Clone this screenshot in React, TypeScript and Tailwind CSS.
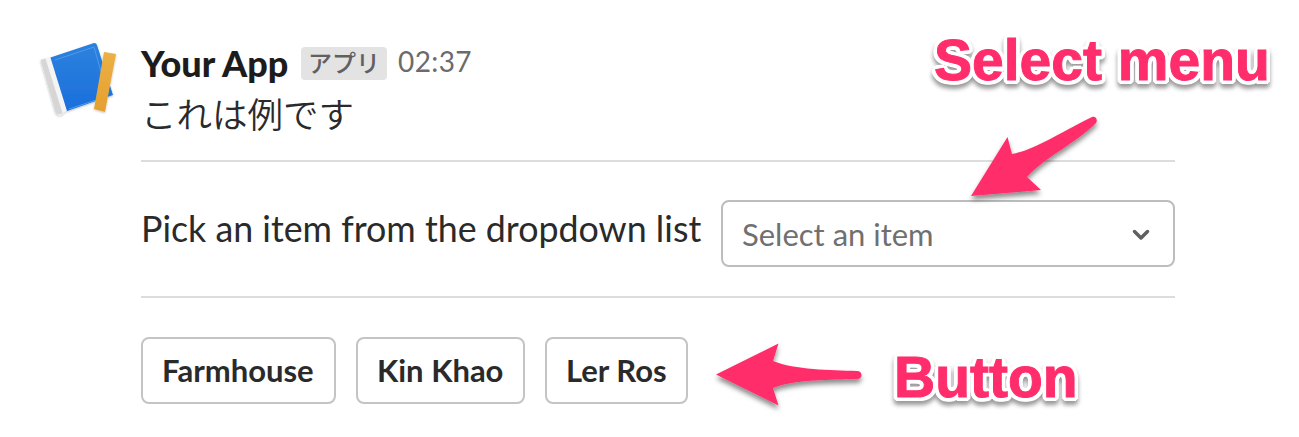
import React from "react";

function AppAvatar() {
  return (
    <svg className="h-[84px] w-[84px] shrink-0" viewBox="0 0 84 84" aria-hidden="true">
      <defs>
        <linearGradient id="cover" x1="0" y1="0" x2="0" y2="1">
          <stop offset="0" stopColor="#2d82dc" />
          <stop offset="1" stopColor="#1a6fdd" />
        </linearGradient>
        <linearGradient id="ruler" x1="0" y1="0" x2="0" y2="1">
          <stop offset="0" stopColor="#ecb045" />
          <stop offset="1" stopColor="#e5a02f" />
        </linearGradient>
        <filter id="soft" x="-20%" y="-20%" width="140%" height="140%">
          <feDropShadow dx="0" dy="1" stdDeviation="1.200" floodColor="#000" floodOpacity="0.25" />
        </filter>
      </defs>
      <g filter="url(#soft)">
        <path d="M3.500 22 L13 19 L30 72 L24 77 Q20 78 18 73 Z" fill="#f4f4f4" />
        <path d="M3.500 22 L8.500 20.500 L25.500 75 Q20 79 18 73 Z" fill="#d6d6d6" />
        <path d="M13.500 19.500 L57 5 Q59 4.500 60 7 L76 57 L30 73 Z" fill="url(#cover)" />
        <path d="M18 22 L57 9 L70 55" fill="none" stroke="#4b9aee" strokeWidth="1" />
        <path d="M32 71 L62 61" fill="none" stroke="#4b9aee" strokeWidth="1" />
        <path d="M67 14 L79 16 L68 74 L57 71 Z" fill="url(#ruler)" />
      </g>
    </svg>
  );
}

function ActionButton({ label, className }: { label: string; className: string }) {
  return (
    <button
      className={`flex h-[67px] items-center rounded-[8px] border-2 border-[#c4c4c4] bg-white pl-[19px] font-['Lato',sans-serif] text-[31px] leading-none font-bold whitespace-nowrap text-[#2b2a2b] ${className}`}
    >
      <span>{label}</span>
    </button>
  );
}

function Arrows() {
  return (
    <svg className="pointer-events-none absolute inset-0 h-[437px] w-[1299px]" viewBox="0 0 1299 437" aria-hidden="true">
      <defs>
        <filter id="arrow-shadow" x="-20%" y="-20%" width="140%" height="150%">
          <feDropShadow dx="0" dy="4" stdDeviation="2.500" floodColor="#000" floodOpacity="0.45" />
        </filter>
      </defs>
      <g fill="#ff2d6b" filter="url(#arrow-shadow)">
        <path d="M971 196 L1007.500 137 L1012 154 C1034 150 1056 135 1092 117 C1096 116 1098 120 1096 123 C1076 143 1044 158 1027 177 L1041 190 Z" />
        <path d="M716 374.500 L778.500 343.500 L773 361 C795 370 830 370 857 371 C863 371 863 379 857 379 C830 380 795 379 773 388 L778.500 405.500 Z" />
      </g>
    </svg>
  );
}

function Callout({ text, className }: { text: string; className: string }) {
  return (
    <span
      className={`absolute font-['Liberation_Sans',sans-serif] text-[57px] leading-none font-bold whitespace-nowrap text-[#ff2d6b] [-webkit-text-stroke:1px_#ff2d6b] drop-shadow-[0_4px_2px_rgba(0,0,0,0.4)] [text-shadow:4px_0_0_#fff,-4px_0_0_#fff,0_4px_0_#fff,0_-4px_0_#fff,3px_3px_0_#fff,-3px_3px_0_#fff,3px_-3px_0_#fff,-3px_-3px_0_#fff,2px_4px_0_#fff,-2px_4px_0_#fff,4px_2px_0_#fff,-4px_2px_0_#fff,2px_0_0_#fff,-2px_0_0_#fff] ${className}`}
    >
      {text}
    </span>
  );
}

export default function App() {
  return (
    <main className="relative flex h-[437px] w-[1299px] overflow-hidden bg-white pt-[38px] pl-[37px] font-['Lato','Noto_Sans_CJK_JP',sans-serif] text-[#2b2a2b]">
      <AppAvatar />
      <section className="ml-[20px] flex w-[1034px] flex-col">
        <header className="flex h-[50px] items-center">
          <span className="w-[160px] text-[36px] leading-[50px] font-black whitespace-nowrap text-[#1d1c1d]">Your App</span>
          <span className="flex h-[33px] w-[86px] items-center justify-center rounded-[4px] bg-[#e3e3e3] pb-[2px] font-['Noto_Sans_CJK_JP',sans-serif] text-[24px] leading-none font-medium text-[#616061]">アプリ</span>
          <time className="-mt-[4px] ml-[11px] text-[28px] leading-none tracking-[0.4px] whitespace-nowrap text-[#6c6b6c]">02:37</time>
        </header>
        <p className="h-[72px] font-['Noto_Sans_CJK_JP',sans-serif] text-[35.5px] leading-[50px] font-[350]">これは例です</p>
        <hr className="h-[2px] border-0 bg-[#dddddd]" />
        <div className="flex h-[134px] items-center justify-between">
          <span className="pb-px text-[35.8px] leading-none whitespace-nowrap">Pick an item from the dropdown list</span>
          <button className="mt-[9px] flex h-[67px] w-[454px] items-center justify-between rounded-[8px] border-2 border-[#bdbdbd] bg-white pr-[22px] pl-[19px] text-[31px] leading-none text-[#707070]">
            <span className="pt-[2px]">Select an item</span>
            <svg className="mt-[2px] h-[12px] w-[20px]" viewBox="0 0 20 12" fill="none" stroke="#616061" strokeWidth="3.500" strokeLinecap="round" strokeLinejoin="round" aria-hidden="true">
              <path d="M3.500 2.500 L10 9 L16.500 2.500" />
            </svg>
          </button>
        </div>
        <hr className="h-[2px] border-0 bg-[#dddddd]" />
        <div className="flex gap-[20px] pt-[39px]">
          <ActionButton label="Farmhouse" className="w-[195px]" />
          <ActionButton label="Kin Khao" className="w-[169px] pl-[17px]" />
          <ActionButton label="Ler Ros" className="w-[143px] pl-[18px]" />
        </div>
      </section>
      <Arrows />
      <Callout text="Select menu" className="top-[32px] left-[934px]" />
      <Callout text="Button" className="top-[349px] left-[894px]" />
    </main>
  );
}
